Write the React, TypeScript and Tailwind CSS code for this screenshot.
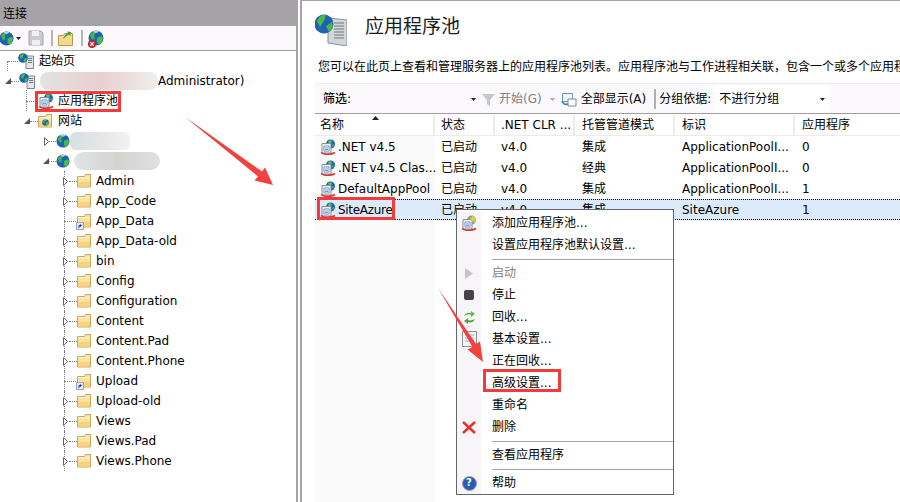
import React from 'react';

const Globe = ({ size = 14 }: { size?: number }) => (
    <svg width={size} height={size} viewBox="0 0 16 16" className="shrink-0">
        <circle cx="8" cy="8" r="7.5" fill="#1d62b5" />
        <path d="M2 5c2-3 5-4 7-4 1 1 0 2-2 3L6 6 7 8 5 10 3 8z" fill="#49b04a" />
        <path d="M9 8l4-2 2 2-1 4-3 3-2-3z" fill="#4cb848" />
        <path d="M5 1.5a7 7 0 0 1 6 0 4 4 0 0 1-6 0z" fill="#a9dcf5" />
    </svg>
);

const Server = () => (
    <svg width={16} height={16} viewBox="0 0 16 16" className="shrink-0">
        <path d="M8 3h7.500v12.500H8z" fill="#e4e7ea" stroke="#7d858c" />
        <path d="M10 5.500h4M10 7.500h4M10 9.500h4" stroke="#6e767d" />
        <circle cx="5" cy="5" r="4.800" fill="#1d62b5" />
        <path d="M1.500 3.500c1-2 3-3 4.500-3L5 3.500 3.500 6zM5.500 6.500l3-2v3l-2 2z" fill="#4cb848" />
    </svg>
);

// app pool icon: sheet with a globe behind and a red ring under it
const PoolIcon = ({ star = false }: { star?: boolean }) => (
    <svg width={16} height={16} viewBox="0 0 16 16" className="shrink-0">
        <circle cx="10.500" cy="5" r="4.500" fill={star ? '#7aa8d6' : '#1d62b5'} />
        <path d="M8 2c2-1 3-1 4 0l-1 3-2 1zM12 6l2-1-1 3z" fill="#5cc04e" />
        <path d="M2 4.500h9v9.500H2z" fill="#eceef1" stroke="#8b8f96" />
        <path d="M4 7h5v5H4z" fill="#fff" stroke="#6f9bd0" />
        <path d="M5 9h3M5 10.500h3" stroke="#6f9bd0" />
        <path d="M1 13.500c3 2.500 10 2.500 14 0" fill="none" stroke="#d83a32" strokeWidth="1.600" />
        {star && <path d="M12 0l1 2.500L15.500 3 13.500 5 14 7.500 12 6 10 7.500 10.500 5 8.500 3 11 2.500z" fill="#ffc928" />}
    </svg>
);

const Folder = ({ link = false }: { link?: boolean }) => (
    <span className="relative shrink-0 w-[14px] h-[14px] block">
        <svg width={14} height={14} viewBox="0 0 14 14" className="block">
            <path d="M.5 2.500h7l1-2h5v12.500H.5z" fill="#fbe2a0" stroke="#c9a65c" />
            <path d="M1 3h12v1H1z" fill="#fff5d2" />
            <path d="M1 8h12v4.500H1z" fill="#f8d27e" />
        </svg>
        {link && (
            <svg width={8} height={8} viewBox="0 0 8 8" className="absolute -left-[1px] bottom-[-2px]">
                <path d="M.5.500h7v7h-7z" fill="#e6e8f5" stroke="#9a9cc0" />
                <path d="M3 6V3.500h2M4 2.500l1.500 1L4 4.500" fill="none" stroke="#2030a0" />
            </svg>
        )}
    </span>
);

const Expander = ({ open = false }: { open?: boolean }) =>
    open ? (
        <svg width={6} height={6} viewBox="0 0 6 6" className="shrink-0"><path d="M0 6h6V0z" fill="#555" /></svg>
    ) : (
        <svg width={5} height={9} viewBox="0 0 5 9" className="shrink-0"><path d="M.5.500l4 4-4 4z" fill="#fff" stroke="#666" /></svg>
    );

const Dots = ({ w }: { w: string }) => <span className={`block shrink-0 h-0 border-t border-dotted border-[#808080] ${w}`} />;

const folders = [
    { name: 'Admin' },
    { name: 'App_Code' },
    { name: 'App_Data', link: true },
    { name: 'App_Data-old' },
    { name: 'bin' },
    { name: 'Config' },
    { name: 'Configuration' },
    { name: 'Content' },
    { name: 'Content.Pad' },
    { name: 'Content.Phone' },
    { name: 'Upload', link: true },
    { name: 'Upload-old' },
    { name: 'Views' },
    { name: 'Views.Pad' },
    { name: 'Views.Phone' },
];

const pools = [
    { name: '.NET v4.5', mode: '集成', id: 'ApplicationPoolI...', apps: '0' },
    { name: '.NET v4.5 Clas...', mode: '经典', id: 'ApplicationPoolI...', apps: '0' },
    { name: 'DefaultAppPool', mode: '集成', id: 'ApplicationPoolI...', apps: '1' },
    { name: 'SiteAzure', mode: '集成', id: 'SiteAzure', apps: '1', selected: true },
];

const columns = [
    { label: '名称', w: 'w-[120px]', pl: 'pl-[5px]' },
    { label: '状态', w: 'w-[60px]', pl: 'pl-[6px]' },
    { label: '.NET CLR ...', w: 'w-[80px]', pl: 'pl-[6px]' },
    { label: '托管管道模式', w: 'w-[100px]', pl: 'pl-[7px]' },
    { label: '标识', w: 'w-[120px]', pl: 'pl-[7px]' },
    { label: '应用程序', w: 'flex-1', pl: 'pl-[7px]' },
];

const MenuItem = ({ label, icon, disabled }: { label: string; icon?: React.ReactNode; disabled?: boolean }) => (
    <div className={`flex items-center h-[22px] ${disabled ? 'text-[#808080]' : 'text-black'}`}>
        <span className="w-[24px] h-full flex items-center justify-center bg-[#f8f5f9] shrink-0 mr-[11px]">{icon}</span>
        {label}
    </div>
);

const MenuSep = ({ h }: { h: string }) => (
    <div className={`flex items-center ${h}`}>
        <span className="w-[24px] h-full bg-[#f8f5f9] mr-[11px]" />
        <span className="flex-1 h-[1px] bg-[#a5a5a5]" />
    </div>
);

const App: React.FC = () => {
    return (
        <div className="relative w-[900px] h-[502px] overflow-hidden bg-white flex text-[12px] leading-none text-black font-['DejaVu_Sans','Noto_Sans_CJK_SC',sans-serif]">
            {/* Connections panel */}
            <div className="w-[298px] shrink-0 flex flex-col border-r-[2px] border-[#a5a3a5]">
                <div className="h-[26px] bg-[#a5a3a5] flex items-center pl-[3px] pt-[1px] text-[12px]">连接</div>
                <div className="h-[25px] shrink-0 flex items-center bg-[#fbf9fb] border-b border-[#a0a0a0]">
                    <span className="-ml-[1px]"><Globe size={15} /></span>
                    <svg width={5} height={3} viewBox="0 0 5 3" className="ml-[2px] mr-[7px]"><path d="M0 0h5L2.500 3z" fill="#222" /></svg>
                    <svg width={16} height={16} viewBox="0 0 16 16"><path d="M1 1h12l2 2v12H1z" fill="#c9cbcd" stroke="#a3a5a8" /><path d="M4 1h7v5H4zM4 10h8v5H4z" fill="#eef0f1" /></svg>
                    <span className="w-[2px] h-[16px] bg-[#b5b5b5] ml-[7px] mr-[5px]" />
                    <svg width={15} height={15} viewBox="0 0 15 15"><path d="M.5 4.500h5l1-2h8v12H.5z" fill="#f6d98c" stroke="#b99a4e" /><path d="M5 8c1-3 3-5 5-6l-1-1.500L13 1l-.5 4L11 3.500C9 5 7 6 5 8z" fill="#3aa43a" /></svg>
                    <span className="w-[2px] h-[16px] bg-[#b5b5b5] ml-[8px] mr-[5px]" />
                    <span className="relative">
                        <Globe size={16} />
                        <svg width={8} height={8} viewBox="0 0 8 8" className="absolute left-0 bottom-[-2px]"><circle cx="4" cy="4" r="4" fill="#c8202a" /><path d="M2.200 2.200l3.600 3.600M5.800 2.200L2.200 5.800" stroke="#fff" strokeWidth="1.200" /></svg>
                    </span>
                </div>
                <div className="flex-1 relative">
                    <div className="h-5 flex items-center pl-[8px]">
                        <span className="absolute left-[7px] top-[10px] h-[10px] border-l border-dotted border-[#808080]" />
                        <Dots w="w-[10px]" />
                        <Server />
                        <span className="ml-[5px]">起始页</span>
                    </div>
                    <div className="h-5 flex items-center pl-[5px]">
                        <Expander open />
                        <Dots w="w-[8px]" />
                        <Server />
                        <span className="w-[118px] h-[18px] ml-[5px] rounded-[8px] bg-gradient-to-r from-[#e2e3e3] via-[#e9cfcf] to-[#eeeeee]" />
                        <span>Administrator)</span>
                    </div>
                    <div className="relative h-5 flex items-center pl-[26px]">
                        <span className="absolute left-[26px] -top-[1px] h-[21px] border-l border-dotted border-[#808080]" />
                        <Dots w="w-[12px]" />
                        <PoolIcon />
                        <span className="ml-[4px]">应用程序池</span>
                    </div>
                    <div className="h-5 flex items-center pl-[24px]">
                        <Expander open />
                        <Dots w="w-[8px]" />
                        <span className="relative">
                            <Folder />
                            <span className="absolute left-[4px] top-[5px]"><Globe size={7} /></span>
                        </span>
                        <span className="ml-[6px]">网站</span>
                    </div>
                    <div className="h-5 flex items-center pl-[44px]">
                        <Expander />
                        <Dots w="w-[7px]" />
                        <Globe />
                        <span className="w-[60px] h-[18px] rounded-[6px] bg-gradient-to-r from-[#d5e0e2] via-[#e6e6e6] to-[#f2f2f2]" />
                    </div>
                    <div className="h-5 flex items-center pl-[43px]">
                        <Expander open />
                        <Dots w="w-[7px]" />
                        <Globe />
                        <span className="w-[86px] h-[18px] ml-[4px] rounded-[9px] bg-gradient-to-r from-[#dfe5e5] via-[#d4d3d0] to-[#e0e0e0]" />
                    </div>
                    {folders.map((f) => (
                        <div key={f.name} className="relative h-5 flex items-center pl-[63px]">
                            <span className="absolute left-[64px] top-0 h-5 border-l border-dotted border-[#808080]" />
                            {f.link ? (
                                <>
                                    <Dots w="w-[14px] ml-[1px]" />
                                    <span className="-ml-[1px]"><Folder link /></span>
                                </>
                            ) : (
                                <>
                                    <span className="relative bg-white"><Expander /></span>
                                    <Dots w="w-[8px] ml-[1px]" />
                                    <Folder />
                                </>
                            )}
                            <span className="ml-[5px]">{f.name}</span>
                        </div>
                    ))}
                </div>
            </div>

            {/* Application pools page */}
            <div className="flex-1 ml-[2px] flex flex-col border-l-[2px] border-t border-[#a5a3a5] pl-[13px]">
                <div className="h-[44px] mt-[7px] flex items-center shrink-0">
                    <svg width={32} height={32} viewBox="0 0 32 32" className="shrink-0">
                        <path d="M13 4l19 2v26l-19-3z" fill="#d3d7da" stroke="#8a9096" />
                        <path d="M19 9h10M19 12h10M19 15h10M19 18h10M19 21h10M19 24h10" stroke="#70787f" />
                        <circle cx="9" cy="10" r="9.500" fill="#1d62b5" />
                        <path d="M2 7c2-5 6-6.500 9-6.500L9.500 6 5 13zM11 12l6-4 1 5-4 5z" fill="#4cb848" />
                    </svg>
                    <span className="ml-[18px] -mt-[8px] text-[19px] text-[#1c1c1c]">应用程序池</span>
                </div>
                <div className="h-[27px] mt-[1px] mb-[3px] shrink-0 flex items-center whitespace-nowrap overflow-hidden pl-[3px]">
                    您可以在此页上查看和管理服务器上的应用程序池列表。应用程序池与工作进程相关联，包含一个或多个应用程序
                </div>
                {/* Filter bar */}
                <div className="h-[31px] pt-[1px] flex items-center shrink-0 bg-[#fbf9fb] border-t border-[#eeeeee] border-b-[1px] border-b-[#a0a0a0] whitespace-nowrap">
                    <span className="ml-[8px] font-medium w-[148px]">筛选:</span>
                    <svg width={5} height={3} viewBox="0 0 5 3"><path d="M0 0h5L2.500 3z" fill="#222" /></svg>
                    <svg width={15} height={15} viewBox="0 0 15 15" className="ml-[5px]"><path d="M1 2h13L9 8v6L6 12V8z" fill="#c5c8ca" /></svg>
                    <span className="ml-[3px] text-[#808080]">开始(G)</span>
                    <svg width={5} height={3} viewBox="0 0 5 3" className="ml-[8px]"><path d="M0 0h5L2.500 3z" fill="#aaa" /></svg>
                    <svg width={16} height={15} viewBox="0 0 16 15" className="ml-[6px]"><path d="M1.500 1.500h10v8h-10z" fill="#eef4fb" stroke="#6b93bf" /><path d="M7 7h8v7H7z" fill="#fff" stroke="#7f8b96" /><path d="M1 9c1 3 3 4 6 3" fill="none" stroke="#2e86d6" strokeWidth="1.500" /></svg>
                    <span className="ml-[4px]">全部显示(A)</span>
                    <span className="w-[2px] h-[20px] bg-[#b0b0b0] ml-[8px]" />
                    <span className="ml-[3px]">分组依据:</span>
                    <span className="ml-[3px] h-full w-[116px] bg-white flex items-center pl-[5px] justify-between pr-[5px]">
                        不进行分组
                        <svg width={5} height={3} viewBox="0 0 5 3"><path d="M0 0h5L2.500 3z" fill="#222" /></svg>
                    </span>
                </div>
                {/* Pool list */}
                <div className="flex h-[22px] pt-[1px] shrink-0 relative">
                    {columns.map((c) => (
                        <div key={c.label} className={`${c.w} ${c.pl} h-full bg-white border-r-[2px] border-b-[1px] border-[#ececec] flex items-center whitespace-nowrap`}>
                            {c.label}
                        </div>
                    ))}
                    <svg width={7} height={4} viewBox="0 0 7 4" className="absolute left-[57px] top-[2px]"><path d="M3.500 0L7 4H0z" fill="#222" /></svg>
                </div>
                <div className="flex-1 flex flex-col">
                    {pools.map((p) => (
                        <div key={p.name} className={`flex items-center h-[21px] whitespace-nowrap ${p.selected ? 'bg-[#dcebfc] border-y border-dotted border-black' : ''}`}>
                            <div className={`w-[120px] h-full flex items-center gap-[2px] pl-[5px] ${p.selected ? 'tracking-[-0.3px]' : 'bg-[#fafafa]'}`}>
                                <PoolIcon />
                                {p.name}
                            </div>
                            <div className="w-[60px] pl-[6px]">已启动</div>
                            <div className="w-[80px] pl-[6px]">v4.0</div>
                            <div className="w-[100px] pl-[7px]">{p.mode}</div>
                            <div className="w-[120px] pl-[7px]">{p.id}</div>
                            <div className="flex-1 pl-[7px]">{p.apps}</div>
                        </div>
                    ))}
                    <div className="flex-1 w-[120px] bg-[#fafafa]" />
                </div>
            </div>

            {/* Context menu */}
            <div className="absolute left-[456px] top-[209px] w-[218px] h-[286px] bg-white border border-[#666] p-0 pt-[2px] whitespace-nowrap">
                <MenuItem label="添加应用程序池..." icon={<PoolIcon star />} />
                <MenuItem label="设置应用程序池默认设置..." />
                <MenuSep h="h-[6px]" />
                <MenuItem
                    label="启动"
                    disabled
                    icon={<svg width={8} height={11} viewBox="0 0 8 11"><path d="M0 0l8 5.500L0 11z" fill="#c4c4c4" /></svg>}
                />
                <MenuItem label="停止" icon={<span className="block w-[10px] h-[10px] rounded-[2px] bg-[#444]" />} />
                <MenuItem
                    label="回收..."
                    icon={
                        <svg width={13} height={15} viewBox="0 0 13 15">
                            <path d="M1 6c1-3 4-4 7-3V1l4 3-4 3V5C6 4 3 5 1 6z" fill="#5dbb46" />
                            <path d="M12 9c-1 3-4 4-7 3v2L1 11l4-3v2c2 1 5 0 7-1z" fill="#4aa83a" />
                        </svg>
                    }
                />
                <MenuItem
                    label="基本设置..."
                    icon={
                        <svg width={15} height={16} viewBox="0 0 15 16">
                            <path d="M.5.500h14v15H.500z" fill="#f2f3f5" stroke="#8a8f96" />
                            <path d="M3 4h9M3 7h9M3 10h9" stroke="#a9aeb5" />
                        </svg>
                    }
                />
                <MenuItem label="正在回收..." />
                <MenuItem label="高级设置..." />
                <MenuItem label="重命名" />
                <MenuItem
                    label="删除"
                    icon={<svg width={14} height={13} viewBox="0 0 14 13"><path d="M1 1l12 11M13 1L1 12" stroke="#e5332a" strokeWidth="2.500" /></svg>}
                />
                <MenuSep h="h-[6px]" />
                <MenuItem label="查看应用程序" />
                <MenuSep h="h-[6px]" />
                <MenuItem
                    label="帮助"
                    icon={
                        <span className="w-[15px] h-[15px] rounded-full bg-[#2a5db0] border border-[#9aa4b4] text-white font-bold text-[10px] flex items-center justify-center">?</span>
                    }
                />
            </div>

            {/* Annotations drawn over the screenshot */}
            <span className="absolute left-[35px] top-[91px] w-[86px] h-[21px] border-[3px] border-[#f33b3b]" />
            <span className="absolute left-[317px] top-[197px] w-[78px] h-[23px] border-[3px] border-[#f33b3b]" />
            <span className="absolute left-[483px] top-[369px] w-[78px] h-[23px] border-[3px] border-[#f33b3b]" />
            <svg width={900} height={502} viewBox="0 0 900 502" className="absolute inset-0 pointer-events-none">
                <path d="M185 117L262 171.500 265 167.500 273 185 254.500 180.500 258 176.500z" fill="#f4403f" />
                <path d="M438 288L476 344 480 341.500 483 362 467.500 349.500 472.500 347z" fill="#f4403f" />
            </svg>
        </div>
    );
};

export default App;
